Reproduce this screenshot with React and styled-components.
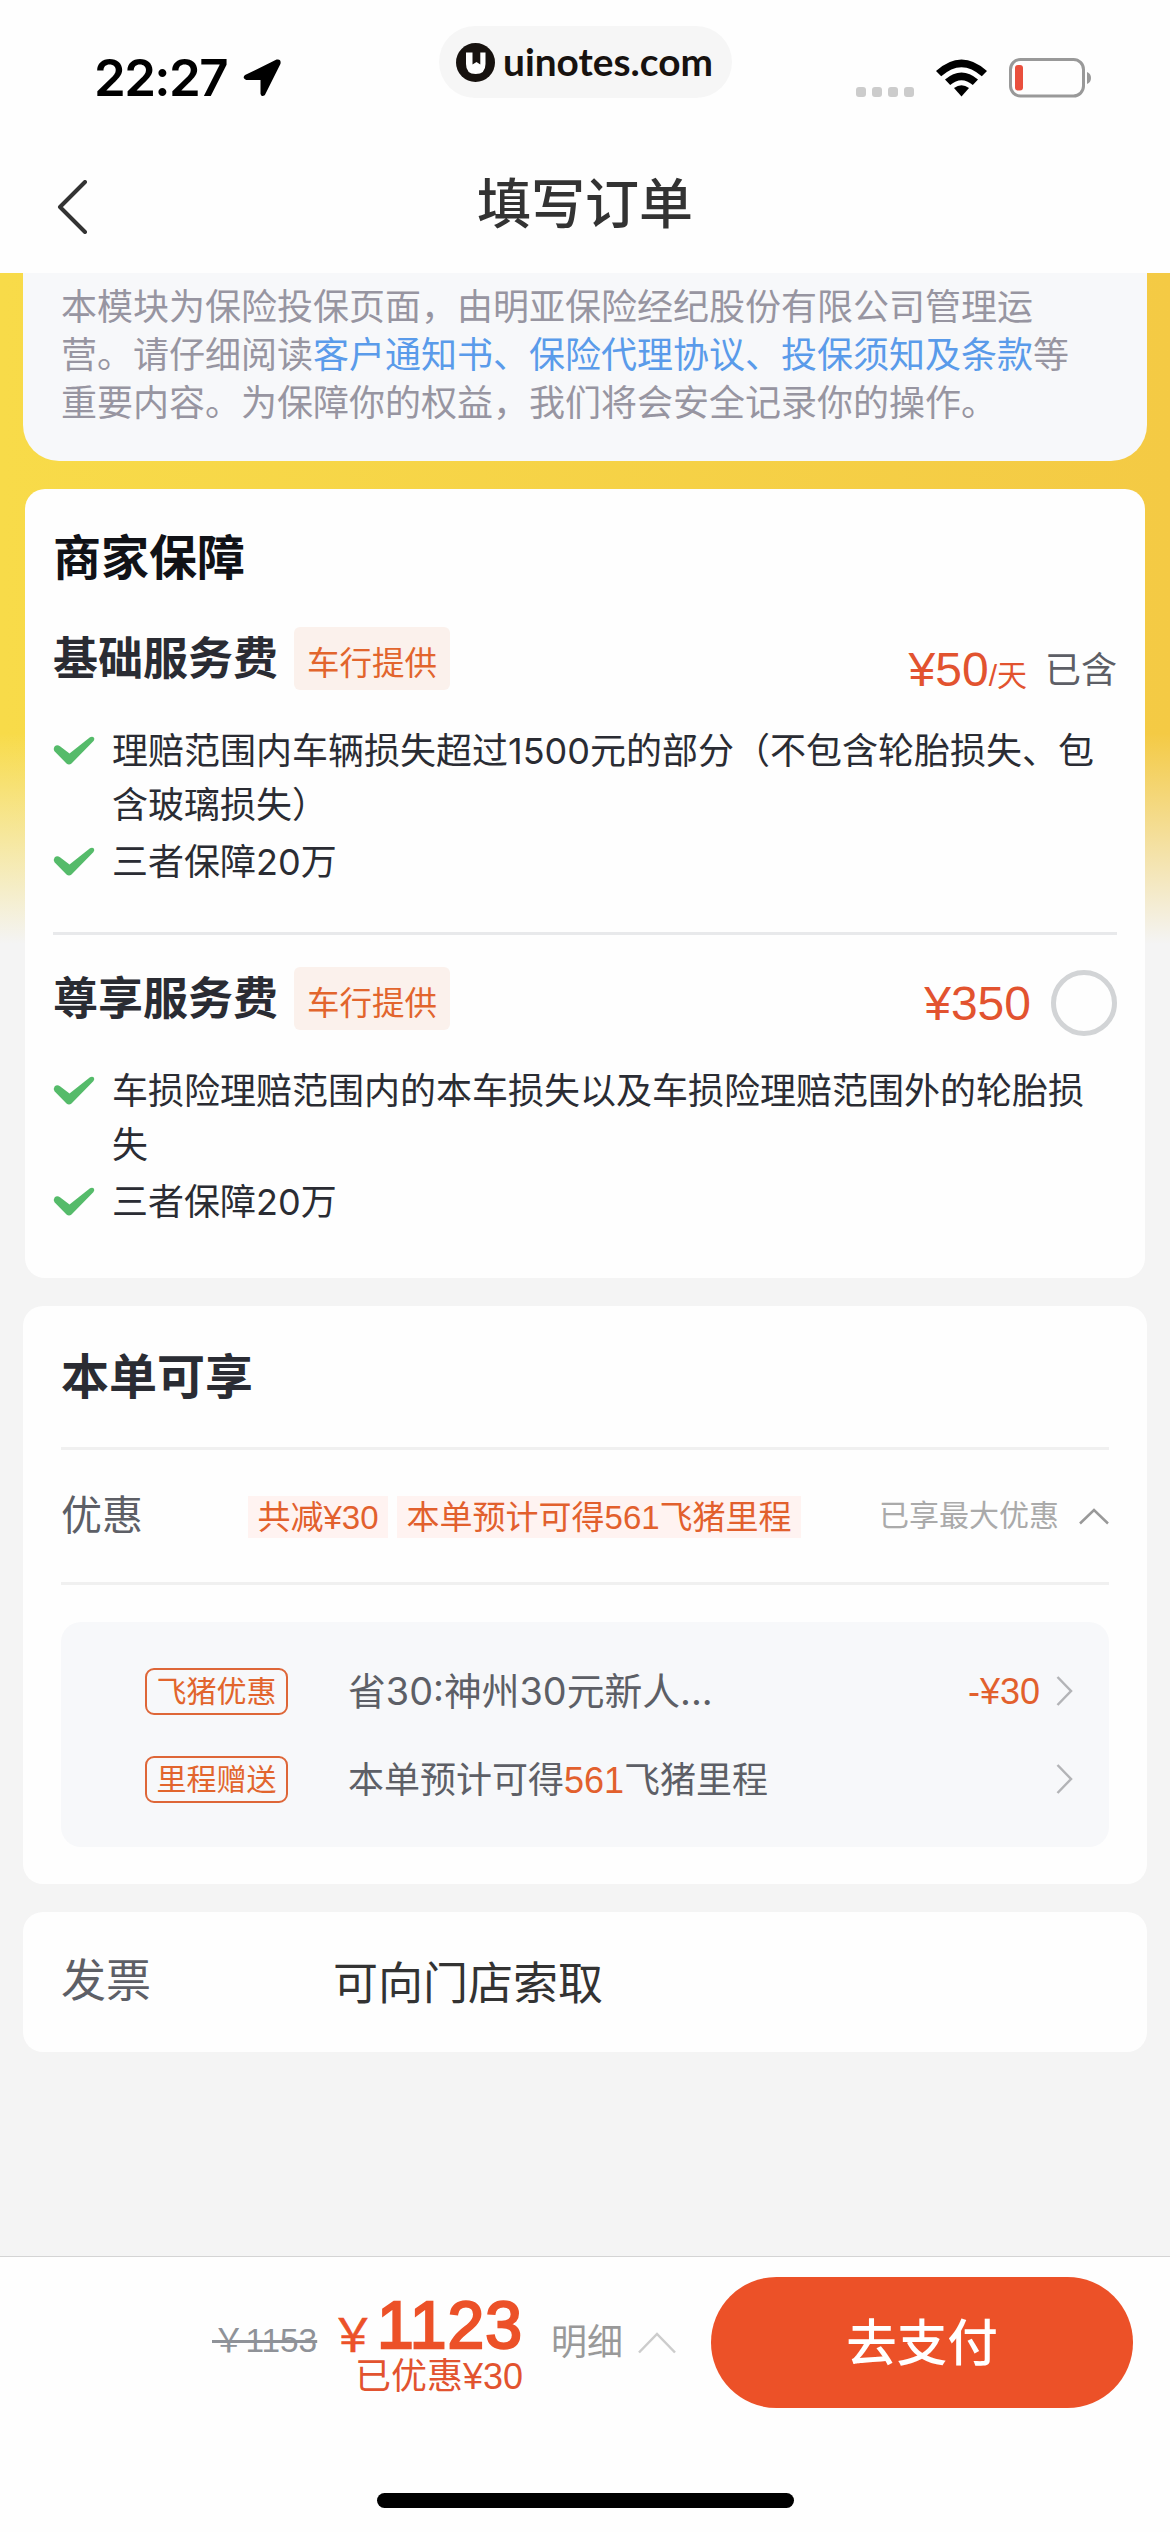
import React from 'react';
import styled, { createGlobalStyle } from 'styled-components';

const GlobalStyle = createGlobalStyle`
  * {
    box-sizing: border-box;
  }

  body {
    margin: 0;
    background: #f4f4f4;
    font-family: 'Liberation Sans', 'Noto Sans CJK SC', sans-serif;
  }
`;

const Page = styled.div`
  width: 1170px;
  height: 2532px;
  display: flex;
  flex-direction: column;
  overflow: hidden;
  background: #f4f4f4;
`;

const Header = styled.header`
  height: 273px;
  flex: none;
  background: #fefefe;
`;

const StatusBar = styled.div`
  height: 140px;
  display: grid;
  grid-template-columns: 439px 293px 1fr;
  align-items: start;
`;

const StatusLeft = styled.div`
  display: flex;
  align-items: center;
  gap: 15px;
  padding: 48px 0 0 94px;
`;

const Time = styled.span`
  width: 133px;
  font-family: Inter, sans-serif;
  font-weight: 600;
  font-size: 51px;
  line-height: 60px;
  letter-spacing: -1.6px;
  white-space: nowrap;
  color: #000000;
`;

const SitePill = styled.div`
  height: 72px;
  margin-top: 26px;
  padding-left: 17px;
  display: flex;
  align-items: center;
  gap: 8px;
  border-radius: 36px;
  background: #f6f6f6;
  font-family: Lato, sans-serif;
  font-weight: 700;
  font-size: 38.8px;
  line-height: 68px;
  white-space: nowrap;
  color: #17120f;
`;

const SiteName = styled.span`
  padding-bottom: 3px;
`;

const StatusRight = styled.div`
  display: flex;
  align-items: center;
  gap: 22px;
  padding: 58px 0 0 124px;
`;

const Signal = styled.div`
  display: flex;
  gap: 6px;
  margin-top: 27px;

  i {
    width: 10px;
    height: 10px;
    border-radius: 3px;
    background: #cccccc;
  }
`;

const NavBar = styled.div`
  height: 133px;
  display: grid;
  grid-template-columns: 200px 1fr 200px;
  align-items: center;
  padding-bottom: 5px;
`;

const BackButton = styled.button`
  border: 0;
  background: none;
  padding: 6px 0 0 57px;
  text-align: left;

  svg {
    display: block;
  }
`;

const NavTitle = styled.h1`
  margin: 2px 0 0;
  text-align: center;
  font-weight: 500;
  font-size: 54px;
  line-height: 60px;
  color: #333333;
`;

const Body = styled.main`
  flex: 1;
  padding: 0 23px;
  background:
    linear-gradient(180deg, rgba(244, 244, 244, 0) 460px, #f4f4f4 671px),
    linear-gradient(90deg, #f8db49, #f4ca44);
`;

const Notice = styled.section`
  height: 188px;
  padding: 11px 38px 0;
  border-radius: 0 0 36px 36px;
  background: #f7f8fa;
  font-size: 36px;
  line-height: 48px;
  white-space: nowrap;
  color: #9795a1;
`;

const NoticeLink = styled.a`
  color: #5a9bea;
`;

const Card = styled.section`
  margin-top: 28px;
  padding: 0 38px;
  height: ${(props) => props.$height}px;
  border-radius: 20px;
  background: #fefefe;
`;

const GuaranteeCard = styled(Card)`
  margin-left: 2px;
  margin-right: 2px;
  padding: 34px 28px 0;
`;

const CardTitle = styled.h2`
  margin: 0;
  font-weight: 700;
  font-size: 48px;
  line-height: 72px;
  color: ${(props) => props.$color || '#111217'};
`;

const Plan = styled.div`
  height: ${(props) => props.$height}px;
  padding-top: 32px;
`;

const PlanHeader = styled.div`
  height: 63px;
  display: flex;
  align-items: center;
`;

const PlanName = styled.h3`
  margin: 0 16px 0 0;
  padding-top: 3px;
  font-weight: 700;
  font-size: 45px;
  line-height: 60px;
  color: #2a2c33;
`;

const ProviderTag = styled.span`
  height: 63px;
  padding: 6px 13px 0;
  border-radius: 6px;
  background: #fbf1ec;
  font-size: 32.5px;
  line-height: 63px;
  color: #e2652d;
`;

const PlanPrice = styled.span`
  margin-left: auto;
  padding-top: ${(props) => props.$drop}px;
  font-size: 48px;
  line-height: 60px;
  color: #e2532f;

  small {
    font-size: 30px;
  }
`;

const Included = styled.span`
  margin: 24px 0 0 18px;
  font-size: 36px;
  line-height: 40px;
  color: #5d5f66;
`;

const Radio = styled.span`
  width: 66px;
  height: 66px;
  margin: 8px 0 0 20px;
  border: 5px solid #d2d4d6;
  border-radius: 50%;
`;

const Benefits = styled.ul`
  margin: ${(props) => props.$top}px 0 0;
  padding: 0;
  display: flex;
  flex-direction: column;
  gap: 3px;
  list-style: none;
`;

const Benefit = styled.li`
  display: flex;
  align-items: flex-start;
  gap: 17px;
  font-family: Inter, 'Noto Sans CJK SC', sans-serif;
  font-size: 36px;
  line-height: 54px;
  color: #2a2c33;

  svg {
    flex: none;
    margin-top: 12px;
  }
`;

const Divider = styled.hr`
  height: 3px;
  margin: 0;
  border: 0;
  background: ${(props) => props.$color || '#f0f0f0'};
`;

const DealHeading = styled.div`
  height: 141px;
  padding-top: 36px;
`;

const DealSummary = styled.div`
  height: 132px;
  display: flex;
  align-items: center;
`;

const Label = styled.span`
  width: ${(props) => props.$width}px;
  font-size: ${(props) => props.$size}px;
  line-height: 60px;
  color: #5d5f66;
`;

const SavingTag = styled.span`
  height: 42px;
  margin: 2px 9px 0 0;
  padding: 1px 9.5px 0;
  background: #fff3f1;
  font-size: 33px;
  line-height: 42px;
  color: #e2602d;
`;

const BestDeal = styled.span`
  margin-left: auto;
  display: flex;
  align-items: center;
  gap: 20px;
  font-size: 30px;
  line-height: 40px;
  color: #aaaaaa;
`;

const DealList = styled.div`
  height: 225px;
  margin-top: 37px;
  padding: 25px 36px 0 84px;
  border-radius: 20px;
  background: #f7f8fa;
`;

const DealRow = styled.div`
  height: 88px;
  display: flex;
  align-items: center;
`;

const DealBadge = styled.span`
  width: 143px;
  height: 47px;
  margin-right: 60px;
  border: 2px solid #de6638;
  border-radius: 9px;
  text-align: center;
  font-size: 30px;
  line-height: 44px;
  color: #e2652d;
`;

const DealText = styled.span`
  flex: 1;
  padding-top: ${(props) => (props.$wide ? 0 : 3)}px;
  font-family: ${(props) => (props.$wide ? "Inter, 'Noto Sans CJK SC', sans-serif" : 'inherit')};
  font-size: ${(props) => (props.$wide ? 37.8 : 36)}px;
  line-height: 54px;
  color: #5d5f66;

  em {
    font-style: normal;
    color: #e2602d;
  }
`;

const DealAmount = styled.span`
  margin-right: 16px;
  padding-top: 1px;
  font-size: 36px;
  line-height: 40px;
  color: #e2602d;
`;

const InvoiceRow = styled.div`
  height: 140px;
  display: flex;
  align-items: center;
`;

const InvoiceValue = styled.span`
  padding-top: 5px;
  font-size: 45px;
  line-height: 60px;
  color: #333333;
`;

const Footer = styled.footer`
  height: 276px;
  flex: none;
  display: flex;
  flex-direction: column;
  align-items: center;
  border-top: 1px solid #d4d4d4;
  background: #fefefe;
`;

const PayBar = styled.div`
  width: 100%;
  height: 236px;
  display: flex;
  align-items: flex-start;
  padding: 20px 37px 0 212px;
`;

const OldPrice = styled.del`
  width: 107px;
  margin-top: 44px;
  font-size: 33.4px;
  line-height: 40px;
  white-space: nowrap;
  color: #8f9298;
`;

const Total = styled.div`
  width: 195px;
  margin: 15px 28px 0 9px;
  display: flex;
  flex-direction: column;
  align-items: flex-end;
  white-space: nowrap;
  color: #ec5128;
`;

const TotalPrice = styled.strong`
  font-weight: 400;
  font-size: 66px;
  line-height: 66px;
  letter-spacing: 1px;
  -webkit-text-stroke: 2.4px #ec5128;

  span {
    font-size: 46px;
    vertical-align: -3px;
    -webkit-text-stroke: 0.6px #ec5128;
  }
`;

const Saved = styled.span`
  margin-top: -9px;
  font-size: 36px;
  line-height: 36px;
  color: #e2532f;
`;

const Details = styled.span`
  display: flex;
  align-items: center;
  gap: 15px;
  margin-top: 46px;
  font-size: 36px;
  line-height: 40px;
  color: #999999;
`;

const PayButton = styled.button`
  width: 422px;
  height: 131px;
  margin-left: auto;
  padding: 2px 0 0;
  border: 0;
  border-radius: 66px;
  background: #ec5128;
  font-family: inherit;
  font-weight: 500;
  font-size: 50.5px;
  line-height: 60px;
  color: #ffffff;
`;

const HomeIndicator = styled.div`
  width: 417px;
  height: 15px;
  border-radius: 8px;
  background: #000000;
`;

const LocationIcon = () => (
  <svg width="40" height="40" viewBox="0 0 40 40">
    <path
      d="M3.5 18 L35 2.5 Q38.2 1.8 37.5 5.5 L22 36.5 Q20 38 19.5 35.5 V21 H4.5 Q1.5 20 3.5 18 Z"
      fill="#000"
      stroke="#000"
      strokeWidth="2"
      strokeLinejoin="round"
    />
  </svg>
);

const SiteLogo = () => (
  <svg width="39" height="39" viewBox="0 0 39 39">
    <circle cx="19.5" cy="19.5" r="19.5" fill="#17120f" />
    <path
      d="M10 9.5 H16.5 V21.5 L20.5 19 L24.3 21.5 V9.5 H29.5 V21 Q29.5 31 19.7 31 Q10 31 10 21 Z"
      fill="#fff"
    />
  </svg>
);

const WifiIcon = () => (
  <svg width="51" height="38" viewBox="0 0 51 38">
    <path d="M0 12 Q25.5 -11 51 12 L45.8 17.3 Q25.5 -1 5.2 17.3 Z" />
    <path d="M9 20.5 Q25.5 6.5 42 20.5 L36.8 26 Q25.5 16.5 14.2 26 Z" />
    <path d="M18 29 Q25.5 23.5 33 29 L25.5 37.5 Z" />
  </svg>
);

const BatteryIcon = () => (
  <svg width="84" height="40" viewBox="0 0 84 40">
    <rect x="1.5" y="1.5" width="73" height="36.5" rx="10" fill="none" stroke="#999" strokeWidth="3" />
    <rect x="6" y="7" width="8" height="25.5" rx="3" fill="#e94f3d" />
    <path d="M78 14 Q82 15.5 82 20 Q82 24.5 78 26 Z" fill="#999" />
  </svg>
);

const CheckIcon = () => (
  <svg width="42" height="30" viewBox="0 0 42 30">
    <path
      d="M1.6 10.6 Q4 8 7 10.3 L16.5 17.6 L37 1.3 Q39.5 0.2 41 1.7 Q41.8 3.5 40.3 5.2 L18.5 27.5 Q16 29.5 13.5 27.5 L1.5 15.2 Q0 12.8 1.6 10.6 Z"
      fill="#55bb6a"
    />
  </svg>
);

const ChevronUp = ({ width, height, color }) => (
  <svg width={width} height={height}>
    <path
      d={`M1 ${height - 1.5} L${width / 2} 2 L${width - 1} ${height - 1.5}`}
      fill="none"
      stroke={color}
      strokeWidth="2.5"
    />
  </svg>
);

const ChevronRight = () => (
  <svg width="17" height="30" viewBox="0 0 17 30">
    <path d="M1.5 1 L15 15 L1.5 29" fill="none" stroke="#b3b4b7" strokeWidth="2.5" />
  </svg>
);

const BenefitList = ({ items, top }) => (
  <Benefits $top={top}>
    {items.map((item) => (
      <Benefit key={item}>
        <CheckIcon />
        <span>{item}</span>
      </Benefit>
    ))}
  </Benefits>
);

const basicBenefits = [
  '理赔范围内车辆损失超过1500元的部分（不包含轮胎损失、包含玻璃损失）',
  '三者保障20万',
];

const premiumBenefits = [
  '车损险理赔范围内的本车损失以及车损险理赔范围外的轮胎损失',
  '三者保障20万',
];

const App = () => {
  return (
    <Page>
      <GlobalStyle />
      <Header>
        <StatusBar>
          <StatusLeft>
            <Time>22:27</Time>
            <LocationIcon />
          </StatusLeft>
          <SitePill>
            <SiteLogo />
            <SiteName>uinotes.com</SiteName>
          </SitePill>
          <StatusRight>
            <Signal>
              <i />
              <i />
              <i />
              <i />
            </Signal>
            <WifiIcon />
            <BatteryIcon />
          </StatusRight>
        </StatusBar>
        <NavBar>
          <BackButton>
            <svg width="32" height="54" viewBox="0 0 32 54">
              <path d="M28 2 L3 27 L28 52" fill="none" stroke="#333" strokeWidth="4" strokeLinecap="round" strokeLinejoin="round" />
            </svg>
          </BackButton>
          <NavTitle>填写订单</NavTitle>
        </NavBar>
      </Header>

      <Body>
        <Notice>
          本模块为保险投保页面，由明亚保险经纪股份有限公司管理运
          <br />
          营。请仔细阅读<NoticeLink>客户通知书、保险代理协议、投保须知及条款</NoticeLink>等
          <br />
          重要内容。为保障你的权益，我们将会安全记录你的操作。
        </Notice>

        <GuaranteeCard $height={789}>
          <CardTitle>商家保障</CardTitle>
          <Plan $height={337}>
            <PlanHeader>
              <PlanName>基础服务费</PlanName>
              <ProviderTag>车行提供</ProviderTag>
              <PlanPrice $drop={28}>
                ¥50<small>/天</small>
              </PlanPrice>
              <Included>已含</Included>
            </PlanHeader>
            <BenefitList items={basicBenefits} top={34} />
          </Plan>
          <Divider $color="#e8e9eb" />
          <Plan $height={340}>
            <PlanHeader>
              <PlanName>尊享服务费</PlanName>
              <ProviderTag>车行提供</ProviderTag>
              <PlanPrice $drop={10}>¥350</PlanPrice>
              <Radio />
            </PlanHeader>
            <BenefitList items={premiumBenefits} top={34} />
          </Plan>
        </GuaranteeCard>

        <Card $height={578}>
          <DealHeading>
            <CardTitle $color="#2a2c33">本单可享</CardTitle>
          </DealHeading>
          <Divider />
          <DealSummary>
            <Label $width={187} $size={41}>优惠</Label>
            <SavingTag>共减¥30</SavingTag>
            <SavingTag>本单预计可得561飞猪里程</SavingTag>
            <BestDeal>
              已享最大优惠
              <ChevronUp width={30} height={17} color="#999" />
            </BestDeal>
          </DealSummary>
          <Divider />
          <DealList>
            <DealRow>
              <DealBadge>飞猪优惠</DealBadge>
              <DealText $wide>省30:神州30元新人...</DealText>
              <DealAmount>-¥30</DealAmount>
              <ChevronRight />
            </DealRow>
            <DealRow>
              <DealBadge>里程赠送</DealBadge>
              <DealText>
                本单预计可得<em>561</em>飞猪里程
              </DealText>
              <ChevronRight />
            </DealRow>
          </DealList>
        </Card>

        <Card $height={140}>
          <InvoiceRow>
            <Label $width={272} $size={45}>发票</Label>
            <InvoiceValue>可向门店索取</InvoiceValue>
          </InvoiceRow>
        </Card>
      </Body>

      <Footer>
        <PayBar>
          <OldPrice>￥1153</OldPrice>
          <Total>
            <TotalPrice>
              <span>￥</span>1123
            </TotalPrice>
            <Saved>已优惠¥30</Saved>
          </Total>
          <Details>
            明细
            <ChevronUp width={38} height={22} color="#ccc" />
          </Details>
          <PayButton>去支付</PayButton>
        </PayBar>
        <HomeIndicator />
      </Footer>
    </Page>
  );
};

export default App;
